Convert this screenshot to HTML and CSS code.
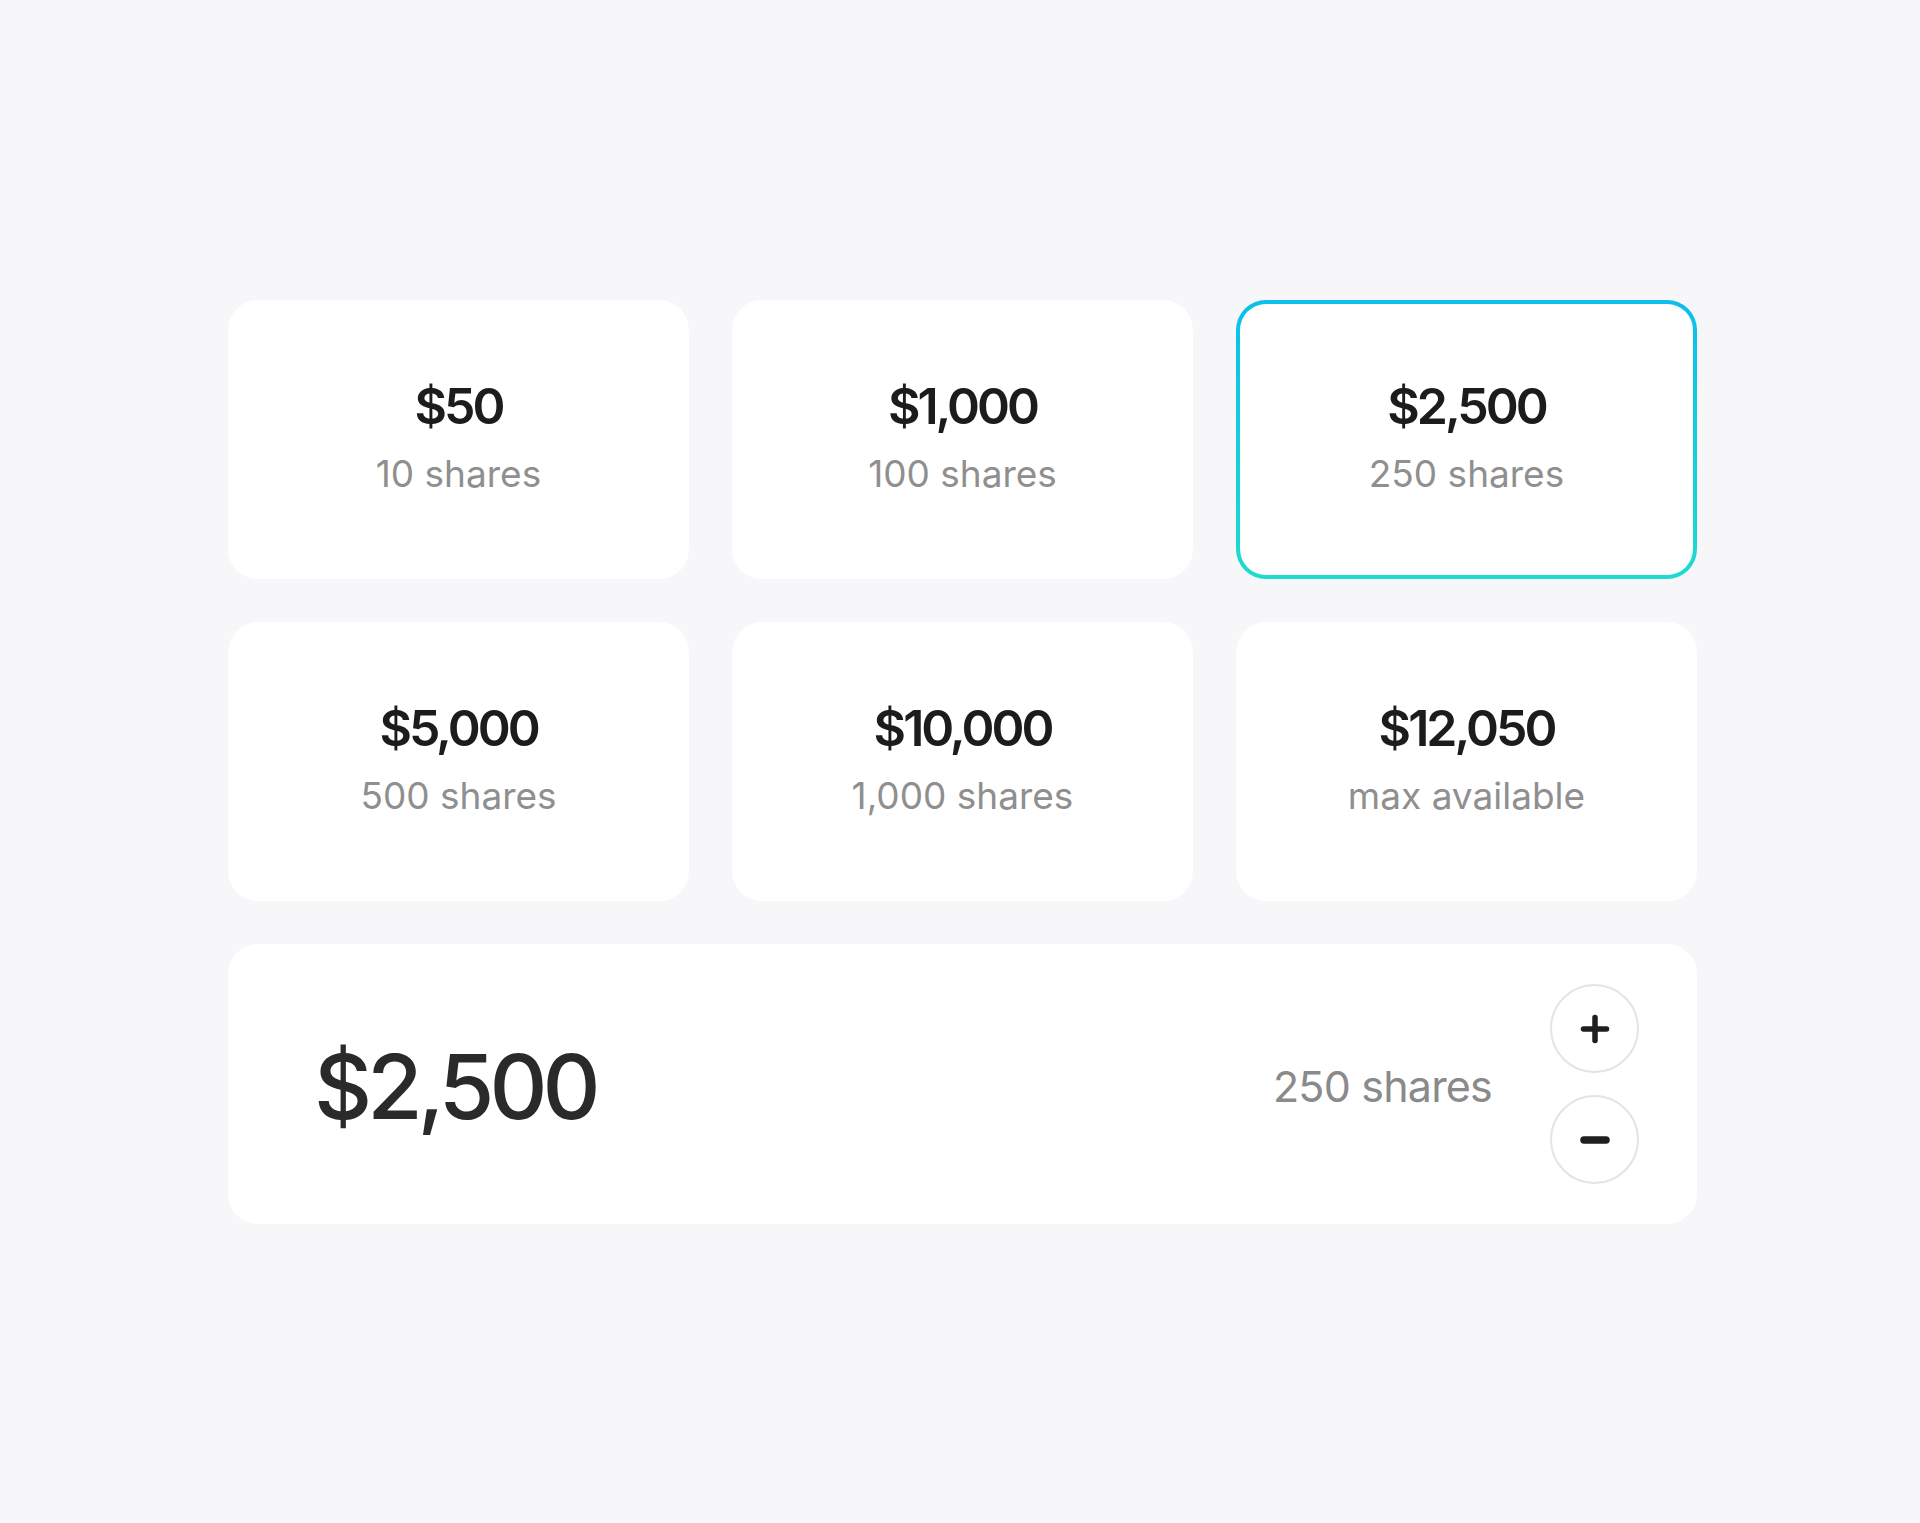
FILE: index.html
```html
<!DOCTYPE html>
<html lang="en">
<head>
<meta charset="utf-8">
<title>Buy amount</title>
<link rel="stylesheet" href="styles.css">
</head>
<body>
<main class="picker">
  <div class="grid">
    <div class="card"><div class="amt">$50</div><div class="sub">10 shares</div></div>
    <div class="card"><div class="amt">$1,000</div><div class="sub">100 shares</div></div>
    <div class="card selected"><div class="amt">$2,500</div><div class="sub">250 shares</div></div>
    <div class="card"><div class="amt">$5,000</div><div class="sub">500 shares</div></div>
    <div class="card"><div class="amt">$10,000</div><div class="sub">1,000 shares</div></div>
    <div class="card"><div class="amt">$12,050</div><div class="sub">max available</div></div>
  </div>
  <div class="panel">
    <div class="big">$2,500</div>
    <div class="right">
      <div class="shares">250 shares</div>
      <div class="steppers">
        <button class="step" aria-label="increase">
          <svg width="30" height="30" viewBox="0 0 30 30"><path d="M15 3.5V26.5M3.5 15H26.5" stroke="#1f1f1f" stroke-width="5.5" stroke-linecap="round" fill="none"/></svg>
        </button>
        <button class="step" aria-label="decrease">
          <svg width="30" height="30" viewBox="0 0 30 30"><path d="M4 15H26" stroke="#1f1f1f" stroke-width="7.5" stroke-linecap="round" fill="none"/></svg>
        </button>
      </div>
    </div>
  </div>
</main>
</body>
</html>
```
FILE: styles.css
```css
html, body {
  margin: 0;
  padding: 0;
  background: #f7f7f9;
}
body {
  font-family: Inter, "Noto Sans", sans-serif;
  min-height: 1523px;
}
.picker {
  width: 1469px;
  margin-left: 228px;
  padding-top: 300px;
}
.grid {
  display: grid;
  grid-template-columns: repeat(3, 461px);
  column-gap: 43px;
  row-gap: 43px;
}
.card {
  box-sizing: border-box;
  height: 279px;
  background: #ffffff;
  border-radius: 30px;
  display: flex;
  flex-direction: column;
  align-items: center;
  justify-content: center;
}
.card.selected {
  border: 4px solid transparent;
  background: linear-gradient(#fff, #fff) padding-box,
              linear-gradient(180deg, #0cbfec 0%, #1edbcf 100%) border-box;
}
.amt {
  font-size: 50px;
  font-weight: 600;
  color: #1c1c1c;
  line-height: 62px;
  letter-spacing: -3px;
}
.sub {
  font-size: 37px;
  font-weight: 400;
  color: #8f8f8f;
  line-height: 62px;
  margin-top: 6px;
}
.panel {
  box-sizing: border-box;
  margin-top: 43px;
  height: 280px;
  background: #ffffff;
  border-radius: 30px;
  display: flex;
  align-items: center;
  justify-content: space-between;
  padding: 0 58px 0 86px;
}
.big {
  font-size: 90px;
  font-weight: 500;
  color: #2a2a2a;
  letter-spacing: -5px;
  padding-top: 4px;
}
.right {
  display: flex;
  align-items: center;
  gap: 58px;
}
.shares {
  font-size: 43px;
  color: #8a8a8a;
  letter-spacing: -0.8px;
  padding-top: 4px;
}
.steppers {
  display: flex;
  flex-direction: column;
  gap: 22px;
}
.step {
  box-sizing: border-box;
  width: 89px;
  height: 89px;
  border-radius: 50%;
  border: 2px solid #e1e5e5;
  background: #fff;
  display: flex;
  align-items: center;
  justify-content: center;
  padding: 0;
}
.step svg { display: block; }
```
